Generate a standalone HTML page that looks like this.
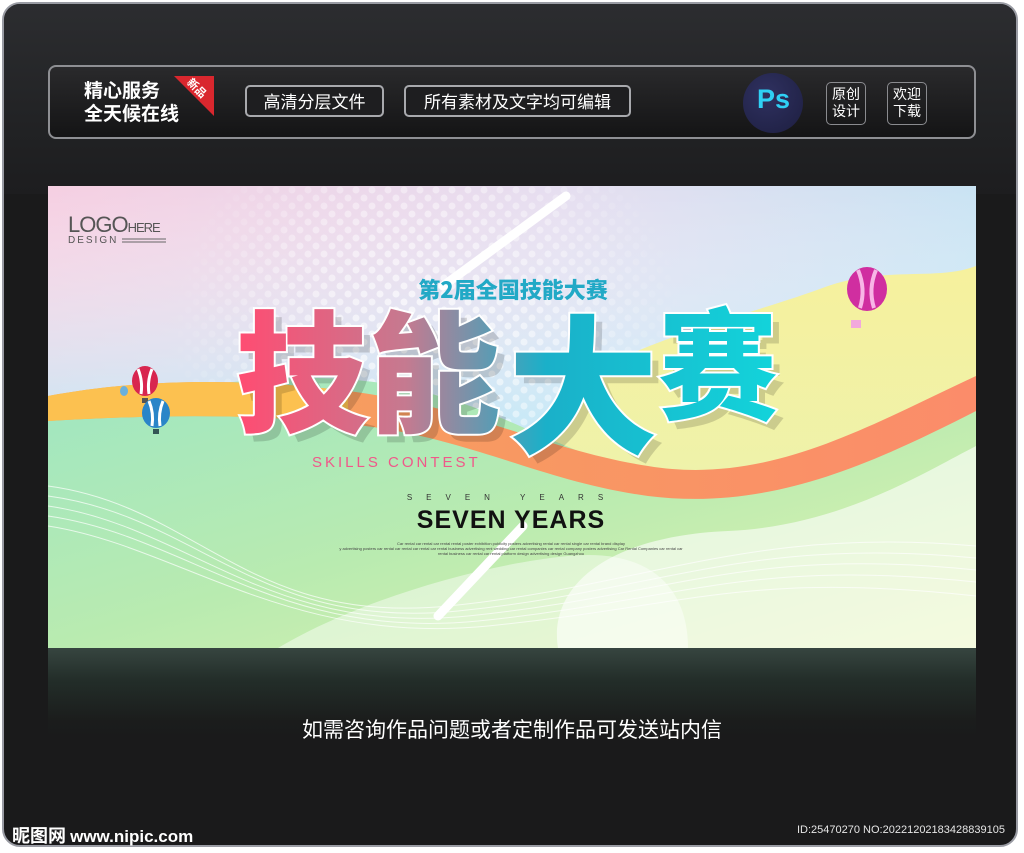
<!DOCTYPE html>
<html><head><meta charset="utf-8"><style>
html,body{margin:0;padding:0;background:#fff;}
body{width:1024px;height:853px;position:relative;overflow:hidden;font-family:"Liberation Sans","Noto Sans CJK SC",sans-serif;}
.frame{position:absolute;left:2px;top:2px;width:1016px;height:845px;border-radius:18px;background:#1a1a1b;border:2px solid #9a9ca4;box-sizing:border-box;}
.frame2{position:absolute;left:0;top:0;right:0;height:190px;border-radius:16px 16px 0 0;background:linear-gradient(#2c2d30,#222325 60%,#1d1d1f);}
.bar{position:absolute;left:48px;top:65px;width:928px;height:74px;border:2px solid #8e8f93;border-radius:8px;box-sizing:border-box;background:linear-gradient(#2a2a2c,#141415);}
.t1{position:absolute;color:#fff;font-weight:bold;font-size:19px;line-height:23px;font-family:"Noto Sans CJK SC",sans-serif;}
.btn{position:absolute;top:85px;height:32px;border:2px solid #a8a9ad;border-radius:5px;box-sizing:border-box;color:#fff;font-size:17px;line-height:28px;text-align:center;font-family:"Noto Sans CJK SC",sans-serif;background:#1e1e20;}
.sm{position:absolute;top:82px;width:40px;height:43px;border:1.5px solid #8a8b8f;border-radius:5px;box-sizing:border-box;color:#fff;font-size:14px;line-height:17px;text-align:center;padding-top:3px;font-family:"Noto Sans CJK SC",sans-serif;}
.refl{position:absolute;left:48px;top:648px;width:928px;height:90px;background:linear-gradient(#3a4a44 0%,#24302b 35%,#1b1d1c 80%,#1a1a1b);opacity:.9}
</style></head><body>
<div class="frame"><div class="frame2"></div></div>
<div class="bar"></div>
<div class="t1" style="left:84px;top:78px;">精心服务<br>全天候在线</div>
<div style="position:absolute;left:174px;top:76px;width:0;height:0;border-top:40px solid #d9272e;border-left:40px solid transparent;"></div>
<div style="position:absolute;left:186px;top:80px;color:#fff;font-size:11px;font-weight:bold;transform:rotate(45deg);font-family:'Noto Sans CJK SC',sans-serif;">新品</div>
<div class="btn" style="left:245px;width:139px;">高清分层文件</div>
<div class="btn" style="left:404px;width:227px;">所有素材及文字均可编辑</div>
<div style="position:absolute;left:743px;top:73px;width:60px;height:60px;border-radius:50%;background:radial-gradient(circle at 40% 35%,#2f3160,#1d1e40);overflow:hidden;">
<div style="position:absolute;left:14px;top:11px;color:#2fd0f5;font-weight:bold;font-size:27px;font-family:'Liberation Sans',sans-serif;">Ps</div></div>
<div class="sm" style="left:826px;">原创<br>设计</div>
<div class="sm" style="left:887px;">欢迎<br>下载</div>

<svg style="position:absolute;left:48px;top:186px" width="928" height="462" viewBox="0 0 928 462">
<defs>
<linearGradient id="bg" x1="0" y1="0" x2="1" y2="0"><stop offset="0" stop-color="#f5cfe2"/><stop offset=".55" stop-color="#e6def0"/><stop offset="1" stop-color="#c9e3f3"/></linearGradient>
<linearGradient id="bgv" x1="0" y1="0" x2="0" y2="1"><stop offset="0" stop-color="#fff" stop-opacity="0"/><stop offset=".5" stop-color="#bdeefa" stop-opacity=".7"/><stop offset="1" stop-color="#bdeefa" stop-opacity="0"/></linearGradient>
<linearGradient id="grn" x1="0" y1="0" x2="1" y2="1"><stop offset="0" stop-color="#9fe6c2"/><stop offset=".5" stop-color="#b9ebb0"/><stop offset="1" stop-color="#e5f3b0"/></linearGradient>
<linearGradient id="yel" x1="0" y1="0" x2="0" y2="1"><stop offset="0" stop-color="#f6f19d"/><stop offset="1" stop-color="#e8f2b5"/></linearGradient>
<linearGradient id="org" x1="0" y1="0" x2="1" y2="0"><stop offset="0" stop-color="#f5a55a"/><stop offset="1" stop-color="#fb8c6a"/></linearGradient>
<linearGradient id="tx" x1="190" y1="0" x2="750" y2="0" gradientUnits="userSpaceOnUse"><stop offset="0" stop-color="#ff4c72"/><stop offset=".3" stop-color="#c57a90"/><stop offset=".55" stop-color="#1ab0c9"/><stop offset="1" stop-color="#12d7dc"/></linearGradient>
<pattern id="dots" width="16" height="16" patternUnits="userSpaceOnUse"><circle cx="4" cy="4" r="3.5" fill="#fff" opacity=".7"/><circle cx="12" cy="12" r="3.5" fill="#fff" opacity=".7"/></pattern>
<radialGradient id="dm" cx="380" cy="150" r="260" gradientUnits="userSpaceOnUse"><stop offset="0" stop-color="#fff"/><stop offset=".6" stop-color="#888"/><stop offset="1" stop-color="#000"/></radialGradient>
<mask id="m"><rect width="928" height="462" fill="url(#dm)"/></mask>
</defs>
<rect width="928" height="462" fill="url(#bg)"/>
<rect width="928" height="462" fill="url(#bgv)"/>
<rect x="0" y="0" width="928" height="462" fill="url(#dots)" mask="url(#m)"/>
<path d="M520 200 C600 150 700 130 780 100 C840 80 890 95 928 80 L928 462 L400 462 Z" fill="url(#yel)"/>
<path d="M0 230 C120 200 250 180 350 200 C450 220 500 260 600 290 C700 300 800 250 928 200 L928 462 L0 462Z" fill="url(#grn)"/>
<path d="M0 210 C80 195 180 190 300 205 C420 220 500 265 600 280 C720 300 820 240 928 190 L928 225 C820 280 720 325 600 310 C490 295 420 250 300 238 C190 226 90 230 0 235Z" fill="url(#org)"/>
<path d="M0 210 C80 195 180 190 300 205 L300 238 C190 226 90 230 0 235Z" fill="#fcc150"/>
<path d="M510 462 C500 400 560 350 680 345 C790 340 870 290 928 260 L928 462Z" fill="#fff" opacity=".6"/>
<path d="M230 462 C300 420 420 380 520 370 C600 362 640 400 640 462Z" fill="#fff" opacity=".45"/>
<g stroke="#fff" stroke-width="1" fill="none" opacity=".7">
<path d="M0 300 C150 320 200 440 400 420 S700 340 928 360"/>
<path d="M0 310 C150 330 210 445 410 425 S700 350 928 372"/>
<path d="M0 320 C140 340 220 450 420 430 S700 360 928 384"/>
<path d="M0 330 C140 350 230 455 430 435 S700 372 928 396"/>
<path d="M0 340 C130 360 240 460 440 440 S700 385 928 410"/>
</g>
<line x1="518" y1="10" x2="395" y2="100" stroke="#fff" stroke-width="9" stroke-linecap="round"/>
<line x1="475" y1="340" x2="390" y2="430" stroke="#fff" stroke-width="9" stroke-linecap="round"/>
<text x="20" y="46" font-family="Liberation Sans" font-size="22" fill="#555" letter-spacing="-1">LOGO<tspan font-size="13">HERE</tspan></text>
<text x="20" y="57" font-family="Liberation Sans" font-size="10" fill="#555" letter-spacing="2">DESIGN</text>
<line x1="74" y1="53" x2="118" y2="53" stroke="#666"/><line x1="74" y1="56" x2="118" y2="56" stroke="#666"/>
<text x="465" y="112" text-anchor="middle" font-family="Noto Sans CJK SC" font-weight="900" font-size="22" fill="#22a9c6">第2届全国技能大赛</text>
<g font-family="Noto Sans CJK SC" font-weight="900" font-size="132">
<text x="196" y="244" fill="#000" opacity=".15">技能</text>
<text x="188" y="236" fill="url(#tx)" stroke="#fff" stroke-width="4" paint-order="stroke">技能</text>
<text x="468" y="264" font-size="150" fill="#000" opacity=".15">大</text>
<text x="460" y="256" font-size="150" fill="url(#tx)" stroke="#fff" stroke-width="4" paint-order="stroke">大</text>
<text x="618" y="232" fill="#000" opacity=".15" font-size="120">赛</text>
<text x="610" y="224" fill="url(#tx)" stroke="#fff" stroke-width="4" paint-order="stroke" font-size="120">赛</text>
</g>
<text x="264" y="281" font-family="Liberation Sans" font-size="15" fill="#f0588a" letter-spacing="3">SKILLS CONTEST</text>
<text x="464" y="314" text-anchor="middle" font-family="Liberation Sans" font-size="8" fill="#333" letter-spacing="14">SEVEN YEARS</text>
<text x="463" y="342" text-anchor="middle" font-family="Liberation Sans" font-weight="bold" font-size="25" fill="#111" letter-spacing="1">SEVEN YEARS</text>
<text x="463" y="359" text-anchor="middle" font-family="Liberation Sans" font-size="4" fill="#444">Car rental car rental car rental rental poster exhibition publicity posters advertising rental car rental single car rental brand display</text>
<text x="463" y="364" text-anchor="middle" font-family="Liberation Sans" font-size="4" fill="#444">y advertising posters car rental car rental car rental car rental business advertising rent wedding car rental companies car rental company posters advertising Car Rental Companies car rental car</text>
<text x="463" y="369" text-anchor="middle" font-family="Liberation Sans" font-size="4" fill="#444">rental business car rental car rental platform design advertising design Guangzhou</text>
<g><ellipse cx="97" cy="195" rx="13" ry="15" fill="#d8264f"/><path d="M90 183 Q95 195 93 208 M104 183 Q99 195 101 208" stroke="#fff" stroke-width="3" fill="none"/><rect x="94" y="212" width="6" height="5" fill="#555"/></g>
<g><ellipse cx="108" cy="227" rx="14" ry="15" fill="#2a85c8"/><path d="M101 215 Q106 227 104 240 M115 215 Q110 227 112 240" stroke="#fff" stroke-width="3" fill="none"/><rect x="105" y="243" width="6" height="5" fill="#355"/></g>
<ellipse cx="76" cy="205" rx="4" ry="5" fill="#6ab0dd"/>
<g><ellipse cx="819" cy="103" rx="20" ry="22" fill="#d02ea0"/><path d="M810 84 Q818 103 812 122 M828 84 Q820 103 826 122" stroke="#f8b5e6" stroke-width="4" fill="none"/><rect x="803" y="134" width="10" height="8" fill="#f2a8dc"/></g>
</svg>
<div class="refl"></div>
<div style="position:absolute;left:0;width:1024px;top:714px;text-align:center;color:#fff;font-size:21px;font-family:'Noto Sans CJK SC',sans-serif;">如需咨询作品问题或者定制作品可发送站内信</div>
<div style="position:absolute;left:12px;top:822px;color:#fff;font-weight:bold;font-size:18px;font-family:'Noto Sans CJK SC',sans-serif;">昵图网 <span style="font-family:'Liberation Sans';font-size:17px;">www.nipic.com</span></div>
<div style="position:absolute;left:797px;top:824px;color:#e6e6e6;font-size:11px;font-family:'Liberation Sans';">ID:25470270 NO:20221202183428839105</div>
</body></html>
